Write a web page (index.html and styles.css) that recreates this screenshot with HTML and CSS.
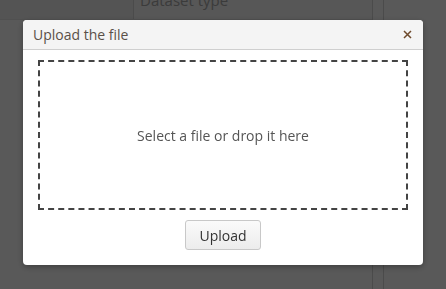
FILE: index.html
```html
<!DOCTYPE html>
<html>
<head>
<meta charset="utf-8">
<link rel="stylesheet" href="styles.css">
</head>
<body>
<div class="page">
  <div class="main">
    <div class="main-top">
      <div class="cell-a"></div>
      <div class="cell-b"><span class="cell-label">Dataset type</span></div>
    </div>
  </div>
  <div class="sep"></div>
  <div class="rest"></div>
</div>
<div class="overlay">
  <div class="modal">
    <div class="modal-header">
      <span class="modal-title">Upload the file</span>
      <button class="close" aria-label="Close">
        <svg width="9" height="9" viewBox="0 0 9 9"><path d="M1 1 L8 8 M8 1 L1 8" stroke="currentColor" stroke-width="1.5" fill="none"/></svg>
      </button>
    </div>
    <div class="modal-body">
      <div class="dropzone">Select a file or drop it here</div>
      <button class="upload-btn">Upload</button>
    </div>
  </div>
</div>
</body>
</html>
```
FILE: styles.css
```css
html, body {
  margin: 0;
  padding: 0;
  height: 100%;
  background: #fff;
  font-family: "Open Sans", "Noto Sans", sans-serif;
  overflow: hidden;
}
.page {
  display: flex;
  height: 100%;
}
.main {
  flex: 0 0 372px;
}
.main-top {
  display: flex;
  height: 19px;
  border-bottom: 1px solid #e6e6e6;
}
.cell-a {
  flex: 0 0 133px;
  background: #f0f0f0;
}
.cell-b {
  flex: 1;
  border-left: 1px solid #d8d8d8;
  background: #f8f8f8;
  overflow: hidden;
}
.cell-label {
  display: block;
  margin-top: -10px;
  padding-left: 6px;
  font-size: 15px;
  line-height: 20px;
  color: #aaa;
}
.sep {
  flex: 0 0 10px;
  border-left: 1px solid #d6d6d6;
  border-right: 1px solid #d6d6d6;
}
.rest {
  flex: 1;
}
.overlay {
  position: fixed;
  inset: 0;
  background: rgba(0, 0, 0, 0.65);
  display: flex;
  justify-content: center;
  align-items: flex-start;
  padding-top: 20px;
}
.modal {
  width: 400px;
  background: #fff;
  border-radius: 4px;
  box-shadow: 0 2px 6px rgba(0, 0, 0, 0.3);
  overflow: hidden;
}
.modal-header {
  display: flex;
  align-items: center;
  justify-content: space-between;
  height: 29px;
  padding: 0 10px;
  background: #f4f4f4;
  border-bottom: 1px solid #cfcfcf;
}
.modal-title {
  font-size: 14px;
  color: #5a5048;
}
.close {
  border: 0;
  background: none;
  padding: 0;
  margin-right: 1px;
  color: #6e4a2c;
  display: flex;
}
.modal-body {
  display: flex;
  flex-direction: column;
  align-items: center;
  gap: 10px;
  padding: 10px 15px 15px;
}
.dropzone {
  align-self: stretch;
  height: 146px;
  border: 2px dashed #444;
  display: flex;
  align-items: center;
  justify-content: center;
  font-size: 14px;
  color: #555;
}
.upload-btn {
  width: 76px;
  height: 30px;
  font-family: inherit;
  font-size: 14px;
  color: #333;
  background: linear-gradient(#fafafa, #ececec);
  border: 1px solid #c8c8c8;
  border-radius: 3px;
}
```
